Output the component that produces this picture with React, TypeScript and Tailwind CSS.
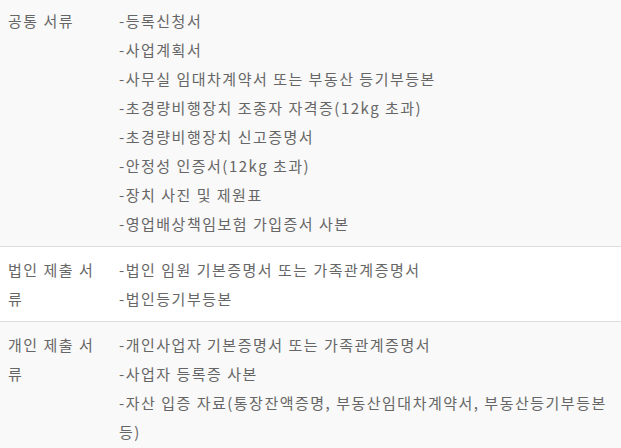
const rows = [
  {
    label: "공통 서류",
    items: [
      "-등록신청서",
      "-사업계획서",
      "-사무실 임대차계약서 또는 부동산 등기부등본",
      "-초경량비행장치 조종자 자격증(12kg 초과)",
      "-초경량비행장치 신고증명서",
      "-안정성 인증서(12kg 초과)",
      "-장치 사진 및 제원표",
      "-영업배상책임보험 가입증서 사본",
    ],
    bg: "bg-[#f9f9f9]",
  },
  {
    label: "법인 제출 서류",
    items: ["-법인 임원 기본증명서 또는 가족관계증명서", "-법인등기부등본"],
    bg: "bg-white",
  },
  {
    label: "개인 제출 서류",
    items: [
      "-개인사업자 기본증명서 또는 가족관계증명서",
      "-사업자 등록증 사본",
      "-자산 입증 자료(통장잔액증명, 부동산임대차계약서, 부동산등기부등본 등)",
    ],
    bg: "bg-[#f9f9f9]",
  },
];

export default function App() {
  return (
    <div className="h-[448px] w-[621px] overflow-hidden bg-[#f9f9f9] font-['Noto_Sans_CJK_KR',sans-serif] text-[15px] leading-[29px] tracking-[1.5px] text-[#666]">
      <div className="-mt-[2px]">
        {rows.map((row, i) => (
          <div
            key={row.label}
            className={`flex py-2 ${row.bg} ${i > 0 ? "border-t border-[#dddddd]" : ""}`}
          >
            <div className="w-[119px] shrink-0 pl-2 pr-[22px]">{row.label}</div>
            <div className="flex-1 pr-2">
              {row.items.map((item) => (
                <div key={item}>{item}</div>
              ))}
            </div>
          </div>
        ))}
      </div>
    </div>
  );
}
